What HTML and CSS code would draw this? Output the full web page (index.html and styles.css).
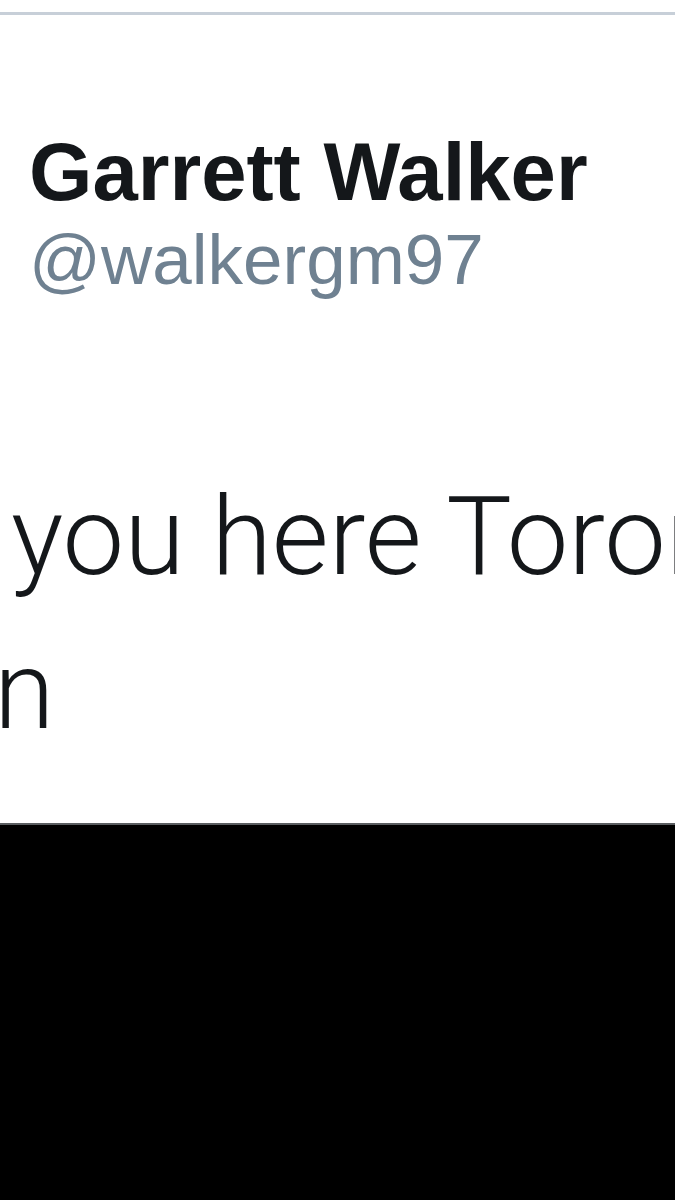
FILE: index.html
```html
<!DOCTYPE html>
<html>
<head>
<meta charset="utf-8">
<link rel="stylesheet" href="styles.css">
</head>
<body>
<div class="page">
  <div class="card">
    <div class="author">
      <div class="name">Garrett Walker</div>
      <div class="handle">@walkergm97</div>
    </div>
    <div class="tweet">
      <div class="line first">you here Toronto</div>
      <div class="line second">n</div>
    </div>
  </div>
  <div class="media"></div>
</div>
</body>
</html>
```
FILE: styles.css
```css
html, body {
  margin: 0;
  padding: 0;
  background: #ffffff;
}
.page {
  width: 675px;
  height: 1200px;
  overflow: hidden;
  display: flex;
  flex-direction: column;
}
.card {
  margin-top: 12px;
  border-top: 3px solid #c7cfd8;
  height: 808px;
  display: flex;
  flex-direction: column;
  overflow: hidden;
}
.author {
  padding-left: 29px;
  padding-top: 116px;
  display: flex;
  flex-direction: column;
  gap: 12px;
}
.name {
  font-family: "Liberation Sans", Arial, sans-serif;
  font-weight: 700;
  font-size: 81.5px;
  line-height: 81px;
  color: #14171a;
  white-space: nowrap;
}
.handle {
  font-family: "Liberation Sans", Arial, sans-serif;
  font-size: 71px;
  line-height: 71px;
  color: #6f8191;
  white-space: nowrap;
}
.tweet {
  margin-top: 165px;
  font-family: Roboto, "Liberation Sans", sans-serif;
  font-weight: 300;
  font-size: 110px;
  line-height: 154px;
  color: #14171a;
  white-space: nowrap;
}
.line.first {
  padding-left: 11px;
}
.line.second {
  margin-left: -6px;
}
.media {
  flex: 1;
  background: #000000;
  border-top: 2px solid #5a5d60;
}
```
